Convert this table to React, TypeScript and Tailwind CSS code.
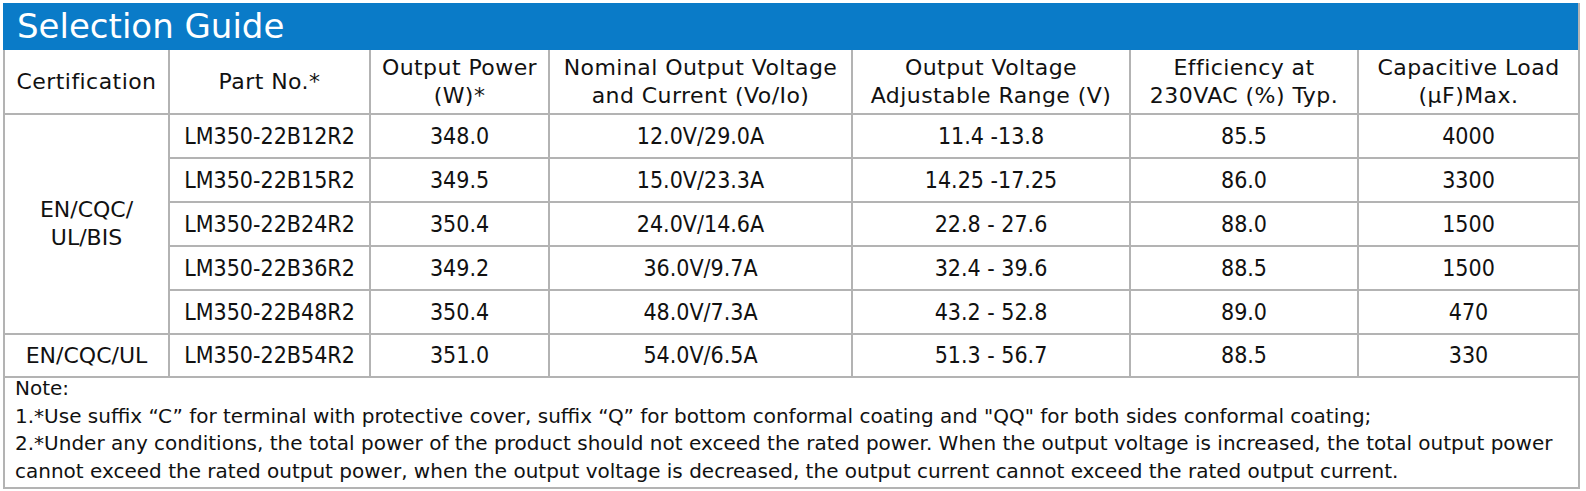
const rows = [
  { part: "LM350-22B12R2", power: "348.0", vo: "12.0V/29.0A", range: "11.4 -13.8", eff: "85.5", cap: "4000" },
  { part: "LM350-22B15R2", power: "349.5", vo: "15.0V/23.3A", range: "14.25 -17.25", eff: "86.0", cap: "3300" },
  { part: "LM350-22B24R2", power: "350.4", vo: "24.0V/14.6A", range: "22.8 - 27.6", eff: "88.0", cap: "1500" },
  { part: "LM350-22B36R2", power: "349.2", vo: "36.0V/9.7A", range: "32.4 - 39.6", eff: "88.5", cap: "1500" },
  { part: "LM350-22B48R2", power: "350.4", vo: "48.0V/7.3A", range: "43.2 - 52.8", eff: "89.0", cap: "470" },
];

const cell = "border-2 border-[#b3b3b3] text-center align-middle p-0";
const data = `${cell} font-['DejaVu_Sans_Condensed','DejaVu_Sans',sans-serif] text-[23px]`;
const head = `${cell} font-normal border-t-0 text-[22px] tracking-[0.02em]`;

export default function App() {
  return (
    <div className="w-[1586px] h-[491px] bg-white pt-[3px] pl-[3px] font-['DejaVu_Sans',sans-serif] text-[#111]">
      <div className="w-[1577px] border-2 border-t-0 border-[#b3b3b3]">
        <div className="h-[47px] bg-[#0a7bc8] text-white text-[34px] leading-[47px] pl-[14px] -ml-[2px]">
          Selection Guide
        </div>
        <table className="w-full table-fixed border-collapse">
          <colgroup>
            <col className="w-[164px]" />
            <col className="w-[201px]" />
            <col className="w-[179px]" />
            <col className="w-[303px]" />
            <col className="w-[278px]" />
            <col className="w-[228px]" />
            <col />
          </colgroup>
          <thead>
            <tr className="h-[64px] leading-[28px]">
              <th className={`${head} border-l-0`}>Certification</th>
              <th className={head}>Part No.*</th>
              <th className={head}>Output Power<br />(W)*</th>
              <th className={head}>Nominal Output Voltage<br />and Current (Vo/Io)</th>
              <th className={head}>Output Voltage<br />Adjustable Range (V)</th>
              <th className={head}>Efficiency at<br />230VAC (%) Typ.</th>
              <th className={`${head} border-r-0`}>Capacitive Load<br />(µF)Max.</th>
            </tr>
          </thead>
          <tbody>
            {rows.map((r, i) => (
              <tr key={r.part} className="h-[44px]">
                {i === 0 && (
                  <td rowSpan={5} className={`${cell} border-l-0 text-[22px] leading-[28px]`}>
                    EN/CQC/<br />UL/BIS
                  </td>
                )}
                <td className={data}>{r.part}</td>
                <td className={data}>{r.power}</td>
                <td className={data}>{r.vo}</td>
                <td className={data}>{r.range}</td>
                <td className={data}>{r.eff}</td>
                <td className={`${data} border-r-0`}>{r.cap}</td>
              </tr>
            ))}
            <tr className="h-[43px]">
              <td className={`${cell} border-l-0 text-[22px]`}>EN/CQC/UL</td>
              <td className={data}>LM350-22B54R2</td>
              <td className={data}>351.0</td>
              <td className={data}>54.0V/6.5A</td>
              <td className={data}>51.3 - 56.7</td>
              <td className={data}>88.5</td>
              <td className={`${data} border-r-0`}>330</td>
            </tr>
          </tbody>
        </table>
        <div className="px-[10px] -mt-[3px] pb-[1px] text-[20px] leading-[27.7px]">
          <div>Note:</div>
          <div>1.*Use suffix “C” for terminal with protective cover, suffix “Q” for bottom conformal coating and "QQ" for both sides conformal coating;</div>
          <div>
            2.*Under any conditions, the total power of the product should not exceed the rated power. When the output voltage is increased, the total output power cannot exceed the rated output power, when the output voltage is decreased, the output current cannot exceed the rated output current.
          </div>
        </div>
      </div>
    </div>
  );
}
